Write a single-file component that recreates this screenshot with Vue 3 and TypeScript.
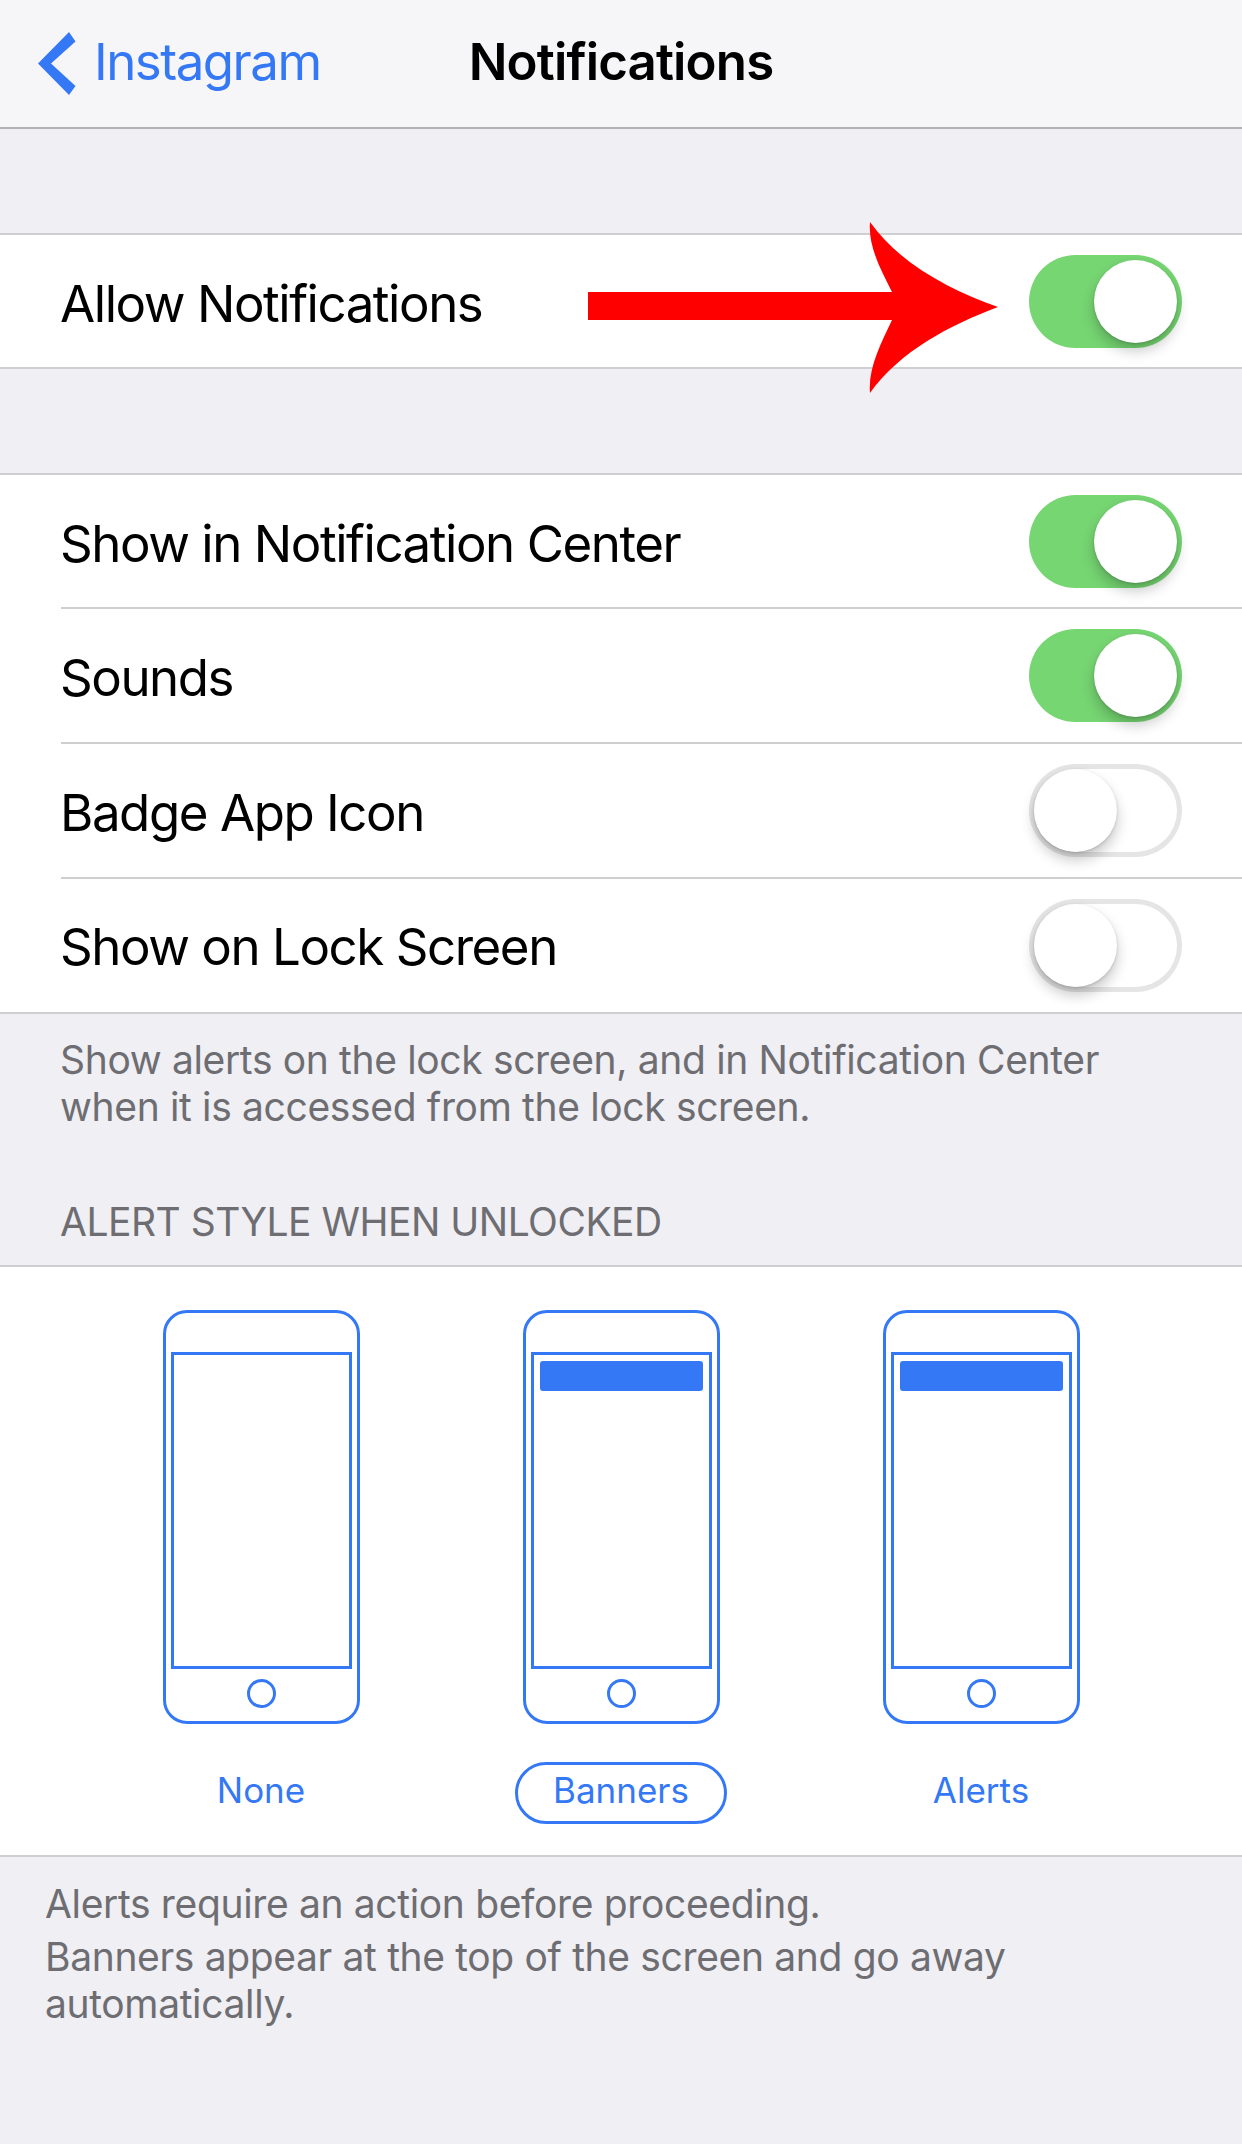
<script setup lang="ts">
interface Row {
  label: string
  on: boolean
}

const rows: Row[] = [
  { label: 'Show in Notification Center', on: true },
  { label: 'Sounds', on: true },
  { label: 'Badge App Icon', on: false },
  { label: 'Show on Lock Screen', on: false }
]

const styles = [
  { label: 'None', banner: false, selected: false },
  { label: 'Banners', banner: true, selected: true },
  { label: 'Alerts', banner: true, selected: false }
]
</script>

<template>
  <div class="page">
    <header class="nav">
      <div class="back">
        <svg class="chevron" width="40" height="66" viewBox="37 30 40 66">
          <polygon points="69,31 75.5,40.5 51,62.5 75.5,85 69,94 38,62.5" fill="#3478f6" />
        </svg>
        <span class="back-text">Instagram</span>
      </div>
      <h1 class="title">Notifications</h1>
      <div></div>
    </header>

    <section class="group first">
      <div class="row">
        <span class="label">Allow Notifications</span>
        <div class="toggle on"><div class="knob"></div></div>
        <svg class="arrow" width="420" height="180" viewBox="585 218 420 180">
          <path d="M588 292H892C880 268 868 246 870 222C900 264 950 290 998 307C950 325 900 351 870 393C868 369 880 345 892 320H588Z" fill="#ff0000" />
        </svg>
      </div>
    </section>

    <section class="group second">
      <div v-for="row in rows" :key="row.label" class="row inset">
        <span class="label">{{ row.label }}</span>
        <div class="toggle" :class="{ on: row.on }"><div class="knob"></div></div>
      </div>
    </section>

    <p class="note lock">Show alerts on the lock screen, and in Notification Center when it is accessed from the lock screen.</p>

    <h2 class="section-title">ALERT STYLE WHEN UNLOCKED</h2>

    <section class="alert-styles">
      <div v-for="s in styles" :key="s.label" class="style">
        <div class="phone">
          <div class="screen">
            <div v-if="s.banner" class="banner"></div>
          </div>
          <div class="home"></div>
        </div>
        <span class="style-label" :class="{ selected: s.selected }">{{ s.label }}</span>
      </div>
    </section>

    <div class="note bottom">
      <p class="para">Alerts require an action before proceeding.</p>
      <p>Banners appear at the top of the screen and go away automatically.</p>
    </div>
  </div>
</template>

<style scoped>
.page {
  width: 1242px;
  height: 2144px;
  background: #efeff4;
  font-family: Inter, "Noto Sans", sans-serif;
  overflow: hidden;
}

.nav {
  display: grid;
  grid-template-columns: 1fr auto 1fr;
  align-items: center;
  height: 129px;
  box-sizing: border-box;
  background: #f6f6f8;
  border-bottom: 2px solid #b2b2b4;
}

.back {
  display: flex;
  align-items: center;
  gap: 17px;
  padding-left: 37px;
  color: #3478f6;
}

.back-text {
  padding-bottom: 5px;
  font-size: 51px;
  letter-spacing: -1.5px;
}

.title {
  margin: 0;
  padding-bottom: 5px;
  font-size: 51px;
  font-weight: 600;
  letter-spacing: -0.85px;
  color: #000;
}

.group {
  background: #fff;
  border-top: 2px solid #cfcfd2;
  border-bottom: 2px solid #cfcfd2;
}

.first {
  margin-top: 104px;
}

.second {
  margin-top: 104px;
}

.row {
  position: relative;
  display: flex;
  align-items: center;
  justify-content: space-between;
  height: 132px;
  padding: 0 60px 0 60px;
}

.inset {
  height: 135px;
  box-sizing: border-box;
}

.inset:first-child {
  height: 133px;
}

.inset:last-child {
  height: 134px;
}

.inset + .inset::before {
  content: "";
  position: absolute;
  top: -1px;
  left: 61px;
  right: 0;
  height: 2px;
  background: #cfcfd2;
}

.label {
  padding-top: 5px;
  font-size: 51px;
  letter-spacing: -1.45px;
  color: #000;
}

.inset .label {
  padding-top: 3px;
}

.arrow {
  position: absolute;
  left: 585px;
  top: -17px;
}

.toggle {
  display: flex;
  justify-content: flex-start;
  width: 153px;
  height: 93px;
  padding: 5px;
  box-sizing: border-box;
  border-radius: 47px;
  background: #fff;
  box-shadow: inset 0 0 0 5px #e5e5e5;
}

.toggle.on {
  justify-content: flex-end;
  background: #76d672;
  box-shadow: none;
}

.knob {
  width: 83px;
  height: 83px;
  border-radius: 50%;
  background: #fff;
  box-shadow: 0 8px 14px rgba(0, 0, 0, 0.22), 0 1px 3px rgba(0, 0, 0, 0.16);
}

.note {
  margin: 0;
  color: #6d6d72;
  font-size: 39px;
  letter-spacing: -0.35px;
  line-height: 47px;
}

.note p {
  margin: 0;
}

.lock {
  padding: 22px 60px 0;
}

.section-title {
  margin: 68px 0 0;
  padding-left: 60px;
  color: #6d6d72;
  font-size: 39px;
  font-weight: 400;
  letter-spacing: -0.5px;
  line-height: 47px;
}

.alert-styles {
  display: flex;
  justify-content: center;
  margin-top: 20px;
  height: 588px;
  background: #fff;
  border-top: 2px solid #cfcfd2;
  border-bottom: 2px solid #cfcfd2;
}

.style {
  display: flex;
  flex-direction: column;
  align-items: center;
  width: 360px;
  padding-top: 43px;
}

.phone {
  display: flex;
  flex-direction: column;
  align-items: center;
  width: 197px;
  height: 414px;
  box-sizing: border-box;
  padding: 39px 5px 0;
  border: 3px solid #3478f6;
  border-radius: 24px;
}

.screen {
  width: 100%;
  height: 317px;
  box-sizing: border-box;
  padding: 6px;
  border: 3px solid #3478f6;
}

.banner {
  height: 30px;
  border-radius: 3px;
  background: #3478f6;
}

.home {
  width: 29px;
  height: 29px;
  box-sizing: border-box;
  margin-top: 10px;
  border: 3px solid #3478f6;
  border-radius: 50%;
}

.style-label {
  display: flex;
  align-items: center;
  justify-content: center;
  width: 212px;
  height: 62px;
  box-sizing: border-box;
  margin-top: 38px;
  padding-bottom: 7px;
  color: #3478f6;
  font-size: 35px;
}

.selected {
  border: 3px solid #3478f6;
  border-radius: 31px;
}

.bottom {
  padding: 23px 45px 0;
}

.para {
  margin-bottom: 6px !important;
}
</style>
